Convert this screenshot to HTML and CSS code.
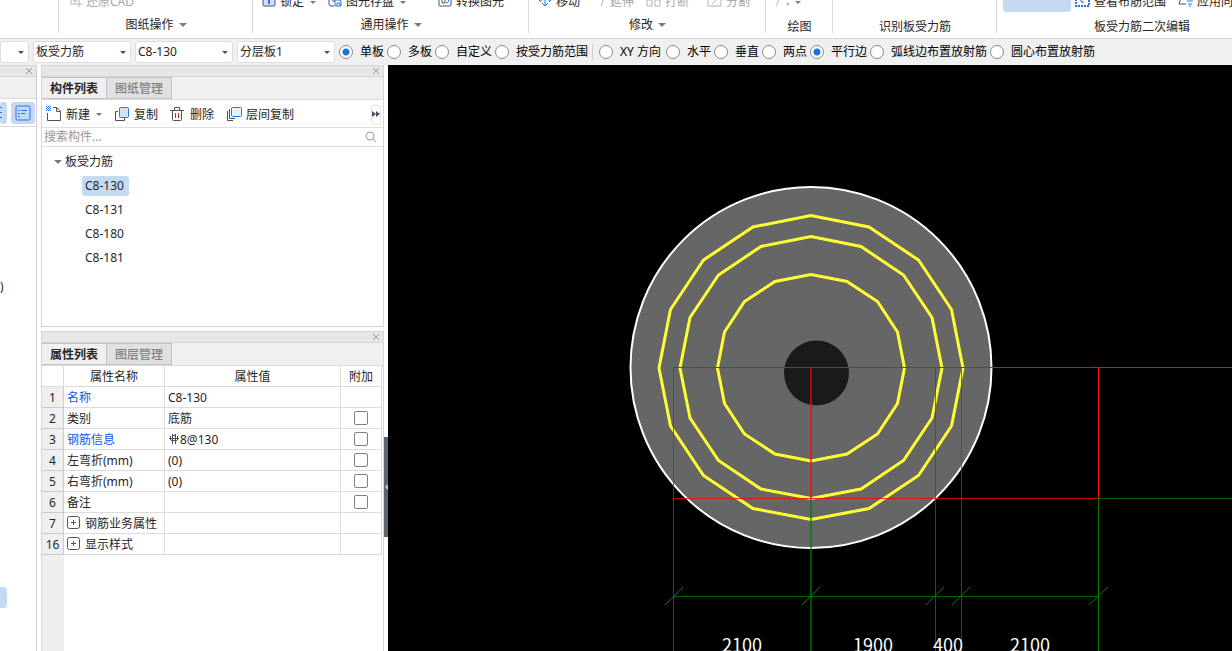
FILE: index.html
```html
<!DOCTYPE html>
<html lang="zh-CN">
  <head>
    <meta charset="UTF-8" />
    <meta name="viewport" content="width=device-width, initial-scale=1.0" />
    <title>板受力筋</title>
    <link rel="stylesheet" href="styles.css">
  </head>
  <body>
    <header class="ribbon">
      <section class="group group-start"></section>
      <section class="group group-drawing">
        <div class="tools">
          <button class="tool muted">
            <svg width="14" height="14" viewBox="0 0 14 14"><path d="M3 0v11h11M0 3h11v11M7 6v3M5 7l2 2 2-2" /></svg>
            还原CAD
          </button>
        </div>
        <h2 class="group-title">图纸操作 <i class="caret"></i></h2>
      </section>
      <section class="group group-common">
        <div class="tools">
          <button class="tool">
            <svg width="14" height="14" viewBox="0 0 14 14"><rect x="1" y="2" width="12" height="11" rx="1" fill="#cfe0fa" /><path class="blue" d="M7 5v6M6 8h2" stroke-width="2" /></svg>
            锁定 <i class="caret small"></i>
          </button>
          <button class="tool">
            <svg width="14" height="14" viewBox="0 0 14 14"><path d="M6 13H3q-2 0-2-2V1h12v4M4 8h3" /><path class="blue" d="M7 7h5l1 1v5H7zM9 13v-3h3v3" /></svg>
            图元存盘 <i class="caret small"></i>
          </button>
          <button class="tool tool-convert">
            <svg width="14" height="14" viewBox="0 0 14 14"><path d="M1 0v12q0 1 1 1h10q1 0 1-1V0M4 6h3v4H4z" /><path class="blue" d="M8 10q3 0 3-4M9 7l2-2 2 2" /></svg>
            转换图元
          </button>
        </div>
        <h2 class="group-title">通用操作 <i class="caret"></i></h2>
      </section>
      <section class="group group-modify">
        <div class="tools">
          <button class="tool">
            <svg width="14" height="14" viewBox="0 0 14 14"><path class="blue" d="M7 2v11M4 10l3 3 3-3M3 5L1 7l2 2M11 5l2 2-2 2M1 7h3M10 7h3" /></svg>
            移动
          </button>
          <button class="tool muted tool-extend">
            <svg width="6" height="14" viewBox="0 0 6 14"><path d="M1 13L5 2" /></svg>
            延伸
          </button>
          <button class="tool muted">
            <svg width="15" height="14" viewBox="0 0 15 14"><path d="M1 7h5v6H1zM9 7h5v6H9zM1 3h5M9 3h5" /></svg>
            打断
          </button>
          <button class="tool muted tool-split">
            <svg width="15" height="14" viewBox="0 0 15 14"><path d="M1 3v10h13V3M5 11l6-6M7 5h4" /></svg>
            分割
          </button>
        </div>
        <h2 class="group-title">修改 <i class="caret"></i></h2>
      </section>
      <section class="group group-draw">
        <div class="tools">
          <button class="tool muted" aria-label="绘图工具">
            <svg width="14" height="14" viewBox="0 0 14 14"><path d="M1 13q3-3 2-10M12 10h2v2h-2z" /></svg>
            <i class="caret small"></i>
          </button>
        </div>
        <h2 class="group-title low">绘图</h2>
      </section>
      <section class="group group-detect">
        <h2 class="group-title low">识别板受力筋</h2>
      </section>
      <section class="group group-edit">
        <div class="tools">
          <button class="tool-active" aria-label="布置受力筋"></button>
          <button class="tool">
            <svg width="15" height="14" viewBox="0 0 15 14"><path class="blue" d="M1 0v13h13V0" stroke-width="2" stroke-dasharray="2 1" /><path d="M6 3v5q0 2 3 1" /></svg>
            查看布筋范围
          </button>
          <button class="tool">
            <svg width="15" height="14" viewBox="0 0 15 14"><path d="M4 2L1 11h7M4 2h9" /><path class="blue" d="M9 8h6M10 11h4M12 12v2" /></svg>
            应用同名
          </button>
        </div>
        <h2 class="group-title low">板受力筋二次编辑</h2>
      </section>
    </header>

    <form class="options">
      <label class="dropdown first"><select aria-label="楼层"><option></option></select></label>
      <label class="dropdown"><select aria-label="构件类型"><option>板受力筋</option></select></label>
      <label class="dropdown"><select aria-label="构件"><option>C8-130</option></select></label>
      <label class="dropdown"><select aria-label="分层"><option>分层板1</option></select></label>
      <div class="radios">
        <label><input type="radio" name="range" checked />单板</label>
        <label><input type="radio" name="range" />多板</label>
        <label><input type="radio" name="range" />自定义</label>
        <label><input type="radio" name="range" />按受力筋范围</label>
      </div>
      <div class="radios directions">
        <label class="xy"><input type="radio" name="direction" />XY 方向</label>
        <label><input type="radio" name="direction" />水平</label>
        <label><input type="radio" name="direction" />垂直</label>
        <label><input type="radio" name="direction" />两点</label>
        <label><input type="radio" name="direction" checked />平行边</label>
        <label><input type="radio" name="direction" />弧线边布置放射筋</label>
        <label><input type="radio" name="direction" />圆心布置放射筋</label>
      </div>
    </form>

    <main class="workspace">
      <aside class="navigator">
        <div class="titlebar"><button class="close" aria-label="关闭"><svg width="8" height="8" viewBox="0 0 8 8"><path d="M1 1l6 6M7 1L1 7" /></svg></button></div>
        <div class="nav-strip"></div>
        <div class="nav-tools">
          <button class="view-btn cut" aria-label="列表">
            <svg width="16" height="16" viewBox="0 0 16 16"><path class="blue" d="M6 2.500h5M6 7.500h5M6 12.500h5" /></svg>
          </button>
          <button class="view-btn" aria-label="详情">
            <svg width="16" height="16" viewBox="0 0 16 16"><rect class="blue" x="1" y="1" width="14" height="14" rx="1" /><path class="blue" d="M3 5.500h2M6 5.500h6M3 8.500h2M6 8.500h4M3 11.500h2" /></svg>
          </button>
        </div>
        <div class="nav-list">
          <span>)</span>
          <i class="nav-selected"></i>
        </div>
      </aside>

      <div class="panels">
        <section class="panel components">
          <div class="titlebar"><button class="close" aria-label="关闭"><svg width="8" height="8" viewBox="0 0 8 8"><path d="M1 1l6 6M7 1L1 7" /></svg></button></div>
          <nav class="tabs">
            <button class="tab active">构件列表</button>
            <button class="tab">图纸管理</button>
          </nav>
          <div class="toolbar">
            <button>
              <svg width="16" height="16" viewBox="0 0 16 16"><path d="M1.500 7v7.500h13V5l-4-3.500H7M10.500 1.500V5.500h4" /><path class="blue" d="M0 .5h1m1 0h1m1 0h1M1 1.500h1m1 0h1M0 2.500h1m1 0h1m1 0h1M1 3.500h1m1 0h1M0 4.500h1m1 0h1m1 0h1" /></svg>
              新建 <i class="caret small"></i>
            </button>
            <button>
              <svg width="16" height="16" viewBox="0 0 16 16"><path d="M4 5.500H1.500v9h9V12" /><rect class="blue" x="5.500" y="1.500" width="9" height="10" rx="1" fill="#d3e3fb" /></svg>
              复制
            </button>
            <button class="delete">
              <svg width="14" height="16" viewBox="0 0 14 16"><path d="M0 4.500h14M4.500 4V1.500h5V4M2.500 4v9.500q0 1 1 1h7q1 0 1-1V4" /><path class="red" d="M5.500 7v5M8.500 7v5" /></svg>
              删除
            </button>
            <button>
              <svg width="16" height="16" viewBox="0 0 16 16"><path d="M1.500 5v9.500H7M3.500 3v9.500H9" /><rect class="blue" x="5.500" y="1.500" width="10" height="9" rx="1" fill="#e8f1fd" /></svg>
              层间复制
            </button>
            <button class="more" aria-label="更多">
              <svg width="8" height="6" viewBox="0 0 8 6"><path class="solid" d="M0 0l4 3-4 3zM4 0l4 3-4 3z" /></svg>
            </button>
          </div>
          <label class="search">
            <input type="text" placeholder="搜索构件..." aria-label="搜索构件" />
            <svg width="12" height="12" viewBox="0 0 12 12"><circle cx="5" cy="5" r="4" /><path d="M8 8l3 3" /></svg>
          </label>
          <ul class="tree">
            <li class="tree-root"><i class="caret"></i>板受力筋</li>
            <li><span class="selected">C8-130</span></li>
            <li><span>C8-131</span></li>
            <li><span>C8-180</span></li>
            <li><span>C8-181</span></li>
          </ul>
        </section>

        <section class="panel properties">
          <div class="titlebar"><button class="close" aria-label="关闭"><svg width="8" height="8" viewBox="0 0 8 8"><path d="M1 1l6 6M7 1L1 7" /></svg></button></div>
          <nav class="tabs">
            <button class="tab active">属性列表</button>
            <button class="tab">图层管理</button>
          </nav>
          <div class="grid">
            <table>
              <colgroup><col class="col-no" /><col class="col-name" /><col /><col class="col-extra" /></colgroup>
              <thead>
                <tr><th></th><th>属性名称</th><th>属性值</th><th>附加</th></tr>
              </thead>
              <tbody>
                <tr><th>1</th><td class="key">名称</td><td>C8-130</td><td></td></tr>
                <tr><th>2</th><td>类别</td><td>底筋</td><td class="check"><input type="checkbox" aria-label="类别附加" /></td></tr>
                <tr><th>3</th><td class="key">钢筋信息</td><td><svg class="rebar" width="10" height="10" viewBox="0 0 10 10"><path d="M3.500 0v10M6.500 0v10M3 1.500h4M1.500 2v4M8.500 2v4M2 6.500h6M0 4.500h10" /></svg>8@130</td><td class="check"><input type="checkbox" aria-label="钢筋信息附加" /></td></tr>
                <tr><th>4</th><td>左弯折(mm)</td><td>(0)</td><td class="check"><input type="checkbox" aria-label="左弯折附加" /></td></tr>
                <tr><th>5</th><td>右弯折(mm)</td><td>(0)</td><td class="check"><input type="checkbox" aria-label="右弯折附加" /></td></tr>
                <tr><th>6</th><td>备注</td><td></td><td class="check"><input type="checkbox" aria-label="备注附加" /></td></tr>
                <tr><th>7</th><td><button class="expand" aria-label="展开"><svg width="13" height="13" viewBox="0 0 13 13"><rect x=".5" y=".5" width="12" height="12" rx="2" /><path d="M4 6.500h5M6.500 4v5" /></svg></button>钢筋业务属性</td><td></td><td></td></tr>
                <tr><th>16</th><td><button class="expand" aria-label="展开"><svg width="13" height="13" viewBox="0 0 13 13"><rect x=".5" y=".5" width="12" height="12" rx="2" /><path d="M4 6.500h5M6.500 4v5" /></svg></button>显示样式</td><td></td><td></td></tr>
              </tbody>
            </table>
          </div>
        </section>
        <button class="collapse" aria-label="收起"></button>
      </div>

      <div class="viewport">
        <svg class="drawing" viewBox="388 65 844 586" preserveAspectRatio="xMinYMin slice">
          <circle class="slab" cx="811" cy="367.5" r="180.5" />
          <circle class="hole" cx="816.5" cy="373" r="32.5" />

          <!-- radial bars, 16 sides each -->
          <g class="bars">
            <path d="M963 368L951.500 426L918.500 475.500L869 508.500L811 519.500L753 508.500L703.500 475.500L670.500 426L659 368L670.500 309.500L703.500 260L753 227L811 215.500L869 227L918.500 260L951.500 309.500Z" />
            <path d="M942 368L932 418L903.500 460.500L861 489L811 498.500L761 489L718.500 460.500L690 418L680 368L690 317.500L718.500 275L761 246.500L811 236.500L861 246.500L903.500 275L932 317.500Z" />
            <path d="M904.500 368L897.500 403.500L877.500 434L847 454L811 461L775 454L744.500 434L724.500 403.500L717.500 368L724.500 332L744.500 301.500L775 281.500L811 274.500L847 281.500L877.500 301.500L897.500 332Z" />
          </g>

          <!-- axis grid -->
          <g class="axis">
            <path class="axis-red" d="M673 367.500H1098" />
            <path class="axis-red" d="M673 498.500H1099M673.500 367V499M935.500 367V499M961.500 367V499" opacity="0.8" />
            <path class="axis-red" d="M1098.500 367V498" />
            <path class="axis-red wide" d="M811 367V499" opacity="0.65" />
            <path class="axis-green" d="M1099 367.500H1232M1098.500 498V651" />
            <path class="axis-green" d="M1099 498.500H1232M673.500 499V651M935.500 499V651M961.500 499V651M673 596.500H1099" opacity="0.8" />
            <path class="axis-green wide" d="M811 499V651" opacity="0.65" />
            <path class="axis-green" d="M665 605L683 587M802 605L820 587M926 605L944 587M952 605L970 587M1089 605L1108 587" />
          </g>
          <g class="dims">
            <text x="742" y="652">2100</text>
            <text x="873" y="652">1900</text>
            <text x="948" y="652">400</text>
            <text x="1030" y="652">2100</text>
          </g>
        </svg>
      </div>
    </main>
  </body>
</html>
```
FILE: styles.css
```css
* {
  margin: 0;
  padding: 0;
  box-sizing: border-box;
}

body {
  display: flex;
  flex-direction: column;
  height: 100vh;
  overflow: hidden;
  background: #fff;
  color: #262626;
  font-family: "Noto Sans", "Noto Sans CJK SC", sans-serif;
  font-size: 12px;
  line-height: 16px;
}

button,
input,
select {
  font: inherit;
  color: inherit;
  border: none;
  background: none;
}

button {
  display: inline-flex;
  align-items: center;
  white-space: nowrap;
}

svg {
  flex: none;
  fill: none;
  stroke: #4b5263;
}

.blue {
  stroke: #2878e4;
}

.red {
  stroke: #e02020;
}

.solid {
  fill: #4b5263;
  stroke: none;
}

.caret {
  display: inline-block;
  border: 4px solid transparent;
  border-top-color: #7a7a7a;
  border-bottom: none;
}

.caret.small {
  border-width: 3px;
  border-bottom: none;
}

/* Ribbon */
.ribbon {
  display: flex;
  flex: none;
  height: 47px;
  margin-top: -8px;
  border-bottom: 1px solid #d6d6d6;
}

.group {
  position: relative;
  flex: none;
  display: flex;
  flex-direction: column;
  padding-bottom: 5px;
}

.group::after {
  content: "";
  position: absolute;
  top: 0;
  right: 0;
  bottom: 5px;
  border-right: 1px solid #dadada;
}

.group-start {
  width: 59px;
}

.group-drawing {
  width: 194px;
}

.group-common {
  width: 276px;
}

.group-modify {
  width: 237px;
}

.group-draw {
  width: 67px;
}

.group-detect {
  width: 164px;
}

.group-edit {
  width: 290px;
}

.tools {
  display: flex;
  height: 20px;
  padding-left: 9px;
  gap: 12px;
}

.tool {
  gap: 4px;
}

.tool svg {
  margin-top: -4px;
}

.tool .caret {
  margin-left: 2px;
}

.tool-convert {
  margin-left: 20px;
}

.tool-extend {
  margin-left: 8px;
}

.tool-split {
  margin-left: 6px;
}

.group-edit .tools {
  padding-left: 6px;
  gap: 8px;
}

.group-edit .tool:last-child {
  margin-left: 4px;
}

.tool-active {
  width: 68px;
  height: 20px;
  margin-right: -4px;
  background: #c4d9f2;
  border-radius: 3px;
}

.muted {
  color: #a6a6a6;
}

.muted svg {
  stroke: #b4b4b4;
}

.group-title {
  display: flex;
  align-items: center;
  justify-content: center;
  gap: 5px;
  margin-top: auto;
  font-size: 12px;
  font-weight: normal;
}

.group-title.low {
  margin-bottom: -2px;
}

/* Option bar */
.options {
  display: flex;
  flex: none;
  align-items: center;
  height: 26px;
  background: #f0f0f0;
}

.dropdown {
  position: relative;
  flex: none;
  width: 98px;
  margin-right: 4px;
}

.dropdown.first {
  width: 29px;
}

.dropdown select {
  display: block;
  width: 100%;
  height: 22px;
  padding-left: 2px;
  appearance: none;
  background: #fff;
  border: 1px solid #dedede;
  border-radius: 3px;
}

.dropdown::after {
  content: "";
  position: absolute;
  top: 10px;
  right: 5px;
  border: 3px solid transparent;
  border-top-color: #4b5263;
  border-bottom: none;
}

.radios {
  display: flex;
  gap: 3px;
  color: #000;
}

.radios label {
  display: flex;
  align-items: center;
  gap: 7px;
  white-space: nowrap;
}

.radios .xy {
  margin-right: 2px;
}

.directions {
  margin-left: 4px;
  padding-left: 6px;
  border-left: 1px solid #cfcfcf;
}

input[type="radio"] {
  width: 14px;
  height: 14px;
  appearance: none;
  background: #fff;
  border: 1px solid #8a8a8a;
  border-radius: 50%;
}

input[type="radio"]:checked {
  background: radial-gradient(circle, #1f74dc 3px, #fff 4px);
}

/* Workspace */
.workspace {
  display: flex;
  flex: 1;
  min-height: 0;
}

.titlebar {
  display: flex;
  flex: none;
  align-items: center;
  justify-content: flex-end;
  height: 12px;
  padding-right: 3px;
  background: #e7e7e7;
  border-top: 1px solid #d6d6d6;
  border-bottom: 1px solid #d6d6d6;
}

.close svg {
  stroke: #999;
}

.navigator {
  display: flex;
  flex: none;
  flex-direction: column;
  width: 37px;
  border-right: 1px solid #cfcfcf;
}

.nav-strip {
  height: 22px;
  background: #f0f0f0;
  border-bottom: 1px solid #dadada;
}

.nav-tools {
  display: flex;
  gap: 4px;
  height: 28px;
  padding: 3px 0;
  border-bottom: 1px solid #d6d6d6;
}

.view-btn {
  justify-content: center;
  width: 24px;
  height: 22px;
  background: #c4d9f2;
  border-radius: 3px;
}

.view-btn.cut {
  justify-content: flex-end;
  width: 7px;
  overflow: hidden;
}

.nav-list {
  display: flex;
  flex: 1;
  flex-direction: column;
  padding-top: 151px;
  line-height: 18px;
}

.nav-selected {
  width: 7px;
  height: 21px;
  margin-top: 291px;
  background: #c4d9f2;
  border-radius: 0 3px 3px 0;
}

.panels {
  position: relative;
  display: flex;
  flex: none;
  flex-direction: column;
  gap: 4px;
  width: 351px;
  padding: 0 4px;
}

.panel {
  display: flex;
  flex-direction: column;
  border: 1px solid #d6d6d6;
  border-top: none;
}

.components {
  flex: none;
}

.properties {
  flex: 1;
  border-bottom: none;
}

.tabs {
  display: flex;
  flex: none;
  height: 23px;
  background: #f0f0f0;
  border-bottom: 1px solid #dadada;
}

.tab {
  justify-content: center;
  width: 65px;
  padding-top: 2px;
  background: #e0e0e0;
  border: 1px solid #c4c4c8;
  border-left: none;
  color: #808080;
  font-weight: 500;
}

.tab.active {
  background: #f0f0f0;
  color: #262626;
  font-weight: bold;
}

.toolbar {
  display: flex;
  align-items: center;
  height: 28px;
  gap: 12px;
  padding: 2px 2px 0 4px;
  border-bottom: 1px solid #e0e0e0;
}

.toolbar button {
  gap: 4px;
}

.toolbar svg {
  margin-top: -2px;
}

.toolbar .caret {
  margin-left: 2px;
}

.toolbar .delete {
  gap: 6px;
}

.toolbar .more {
  justify-content: center;
  width: 10px;
  height: 20px;
  margin-left: auto;
  border: 1px solid #e6e6e6;
  border-radius: 3px;
}

.search {
  display: flex;
  align-items: center;
  height: 19px;
  padding: 0 6px 0 2px;
  border-bottom: 1px solid #e0e0e0;
}

.search input {
  flex: 1;
  min-width: 0;
  outline: none;
}

.search input::placeholder {
  color: #969696;
}

.search svg {
  stroke: #999;
}

.tree {
  height: 179px;
  padding-top: 3px;
  list-style: none;
}

.tree li {
  display: flex;
  align-items: center;
  height: 24px;
  padding-left: 40px;
}

.tree .tree-root {
  gap: 3px;
  padding-left: 12px;
}

.tree span {
  padding: 2px 3px;
  border-radius: 3px;
}

.tree .selected {
  padding-right: 5px;
  background: #c4d9f2;
}

/* Property grid */
.grid {
  flex: 1;
  padding-right: 1px;
  background: linear-gradient(to right, #efefef 22px, #fff 22px);
}

table {
  width: 100%;
  table-layout: fixed;
  border-collapse: separate;
  border-spacing: 0;
  background: #fff;
}

.col-no {
  width: 22px;
}

.col-name {
  width: 101px;
}

.col-extra {
  width: 41px;
}

th,
td {
  height: 21px;
  padding: 2px 3px 0;
  border-right: 1px solid #dcdcdc;
  border-bottom: 1px solid #dcdcdc;
  font-weight: normal;
  white-space: nowrap;
}

tbody th {
  padding: 2px 0 0;
  background: #efefef;
  border-color: #cacaca;
}

.key {
  color: #0f55f5;
}

.check {
  padding-top: 0;
  text-align: center;
}

input[type="checkbox"] {
  display: block;
  width: 14px;
  height: 14px;
  margin: 0 auto;
  appearance: none;
  background: #fff;
  border: 1px solid #808080;
  border-radius: 2px;
}

.rebar {
  margin: 0 1px 3px;
  vertical-align: middle;
}

.expand {
  margin: 0 5px 3px 0;
  vertical-align: middle;
}

.collapse {
  position: absolute;
  top: 372px;
  right: 0;
  justify-content: flex-end;
  width: 4px;
  height: 100px;
  background: #5b6672;
}

.collapse::before {
  content: "";
  border: 3px solid transparent;
  border-right-color: #c4c8cc;
  border-left: none;
}

/* Drawing area */
.viewport {
  flex: 1;
  min-width: 0;
  overflow: hidden;
  background: #000;
}

.drawing {
  display: block;
  width: 100%;
  height: 100%;
}

.slab {
  fill: #666;
  stroke: #fff;
  stroke-width: 2;
}

.hole {
  fill: #1a1a1a;
  stroke: none;
}

.bars {
  stroke: #ff3;
  stroke-width: 3;
}

.axis-red {
  stroke: #f00;
}

.axis-green {
  stroke: #008000;
}

.wide {
  stroke-width: 2;
}

.dims {
  fill: #fff;
  stroke: none;
  font-family: "Noto Sans CJK SC", sans-serif;
  font-size: 18px;
  text-anchor: middle;
}
```
